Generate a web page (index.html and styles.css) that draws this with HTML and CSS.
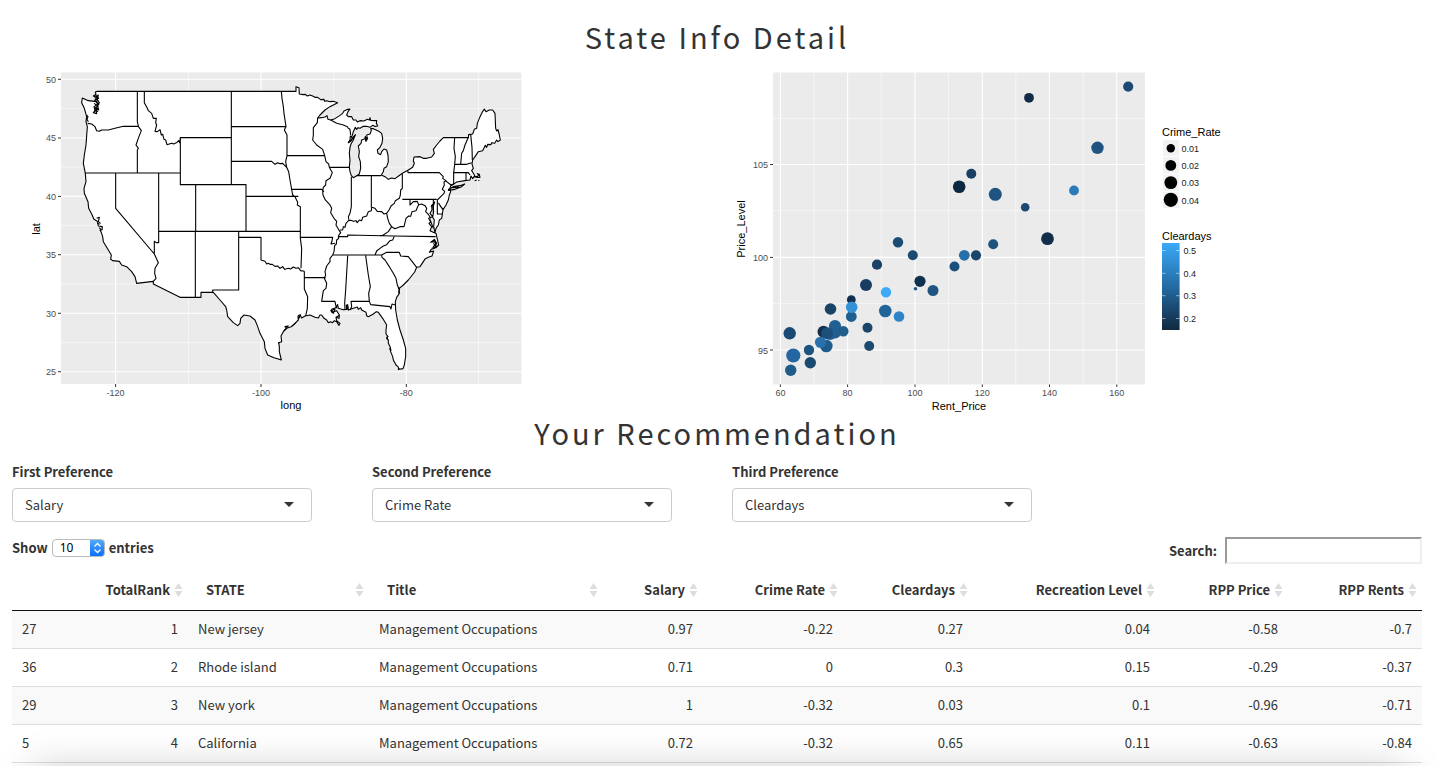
FILE: index.html
```html
<!DOCTYPE html>
<html lang="en">
<head>
<meta charset="utf-8">
<title>State Info Detail</title>
<link rel="stylesheet" href="styles.css">
</head>
<body>
<main class="page">
<h1 class="heading">State Info Detail</h1>
<section class="charts">
<svg class="chart chart-map" viewBox="12 66 512 348" role="img" aria-label="Map of the United States">
<rect class="panel" x="61" y="72.5" width="460.5" height="311.5"/>
<path class="minor" d="M188.5 72.5V384M333.7 72.5V384M478.5 72.5V384M61 108.7H521.5M61 167H521.5M61 225.5H521.5M61 284H521.5M61 342.5H521.5"/>
<path class="major" d="M115.6 72.5V384M261 72.5V384M406.3 72.5V384M61 79.3H521.5M61 138H521.5M61 196.4H521.5M61 254.7H521.5M61 313.3H521.5M61 371.7H521.5"/>
<path class="tick" d="M58 79.3H61M58 138H61M58 196.4H61M58 254.7H61M58 313.3H61M58 371.7H61M115.6 384V387M261 384V387M406.3 384V387"/>
<g transform="translate(20 60) scale(.33333)">
<path class="land" d="M232,94 H828 V80 L837,83 838,102 850,104 856,103 862,108 870,105 878,108 885,112 893,112 902,119 912,118 914,124 920,122 930,125 940,124 953,128 930,140 915,150 900,165 893,174 905,173 915,171 921,167 924,178 932,180 945,176 960,166 968,160 972,153 983,148 990,147 984,155 980,165 985,170 995,170 1000,180 1008,180 1012,186 1020,182 1032,183 1042,178 1048,180 1050,173 1052,181 1064,182 1070,182 1069,190 1073,198 1064,199 1058,196 1050,202 1040,199 1030,199 1020,205 1014,203 1010,208 1006,202 1000,215 995,232 991,228 990,240 985,248 993,243 1000,232 1006,224 1000,240 993,252 990,262 988,280 990,300 988,322 990,335 994,347 1000,353 1010,347 1018,342 1022,325 1021,305 1016,290 1018,275 1015,258 1023,250 1025,240 1035,236 1036,229 1038,242 1042,234 1040,225 1050,222 1054,212 1052,206 1060,206 1075,213 1085,220 1088,235 1086,250 1080,262 1072,270 1074,280 1082,284 1085,275 1092,267 1100,270 1104,285 1105,305 1100,320 1092,325 1090,335 1084,345 1095,350 1105,358 1115,354 1125,356 1140,345 1150,338 1165,330 1178,322 1183,310 1180,303 1182,291 1200,290 1210,295 1220,295 1235,291 1243,280 1240,268 1250,255 1260,243 1270,233 H1345 L1346,224 1352,223 1358,222 1363,208 1370,205 1372,190 1378,175 1386,158 1393,147 1398,155 1408,150 1418,150 1425,160 1427,205 1430,213 1434,209 1438,225 1441,240 1434,245 1430,240 1424,250 1415,248 1413,254 1403,253 1400,262 1396,256 1388,272 1375,275 1365,290 1358,300 1356,312 1360,325 1355,332 1360,340 1366,350 1372,350 1376,345 1372,341 1378,343 1380,352 1370,352 1362,350 1358,356 1353,348 1350,360 1335,362 1310,366 1300,373 1292,378 1290,385 1292,395 1288,405 1285,420 1278,435 1270,448 1262,440 1256,430 1264,442 1269,450 1265,475 1258,480 1255,495 1248,505 1245,518 1241,500 1243,480 1238,472 1241,455 1239,440 1243,430 1235,436 1236,450 1230,460 1238,470 1226,475 1232,486 1227,490 1235,500 1230,512 1243,518 1248,520 1256,555 1248,563 1240,560 1248,552 1243,545 1232,547 1243,538 1250,550 1244,565 1234,568 1228,577 1241,573 1236,588 1225,592 1216,596 1210,605 1200,620 1190,622 1184,636 1165,660 1150,675 1138,685 1138,700 1130,712 1126,725 1127,750 1132,780 1140,810 1150,840 1157,865 1157,890 1153,915 1149,926 1137,928 1134,920 1128,915 1120,900 1118,890 1112,875 1111,862 1105,850 1105,840 1100,835 1104,830 1098,822 1098,810 1100,795 1088,775 1075,757 1069,755 1060,762 1045,770 1040,767 1038,757 1025,750 1022,743 1015,748 1012,741 1000,745 985,750 983,734 979,736 980,748 970,749 955,745 953,734 947,743 935,748 936,757 950,752 958,765 957,775 948,772 950,782 960,790 957,796 950,785 943,782 938,788 932,785 925,788 920,780 912,775 905,765 900,765 895,774 885,772 870,765 855,768 845,774 840,764 834,768 835,780 825,790 814,800 800,805 790,815 783,828 785,845 776,848 778,860 778,875 784,900 775,897 762,893 743,885 735,865 733,845 720,820 712,797 705,780 690,768 672,765 662,775 660,790 653,797 640,788 623,770 620,750 617,740 600,720 580,697 H543 V712 H480 L400,672 V664 L350,670 345,650 335,635 320,620 305,615 298,604 278,602 272,598 274,585 265,570 250,545 248,530 243,515 240,510 246,510 247,500 235,498 232,484 222,478 215,462 206,445 204,425 193,400 192,385 198,365 196,340 190,310 193,285 198,255 202,200 198,185 200,170 193,145 185,128 187,114 205,122 230,125 232,133 222,140 225,152 220,158 230,161 228,148 236,150 232,135 238,128 232,120 235,105 228,112 220,108 228,103 226,96Z"/>
<path class="line" d="M352,94V185L355,198M203,190L215,192 225,200 230,212 238,214 245,210 265,210 285,205 310,199H355L364,212 356,232 348,255 355,265 352,270V338M196,339H481M373,94V128L382,145 385,152 395,160 400,175 409,175 407,188 410,195 405,214 412,215 420,209 424,225 428,223 432,238 437,240 441,254 455,250 461,252 467,249 470,248 476,242 479,248 481,233M481,233H634V374H481ZM634,94V233M634,200H798M634,304H755L765,313 773,308 780,311 788,310 800,322M634,374H678V514M527,374V514M416,339V514M678,409H835M287,339V445L403,582M416,514V548L409,548 403,544V582L415,608 405,625 404,640 408,655 400,664M416,514H841M526,514V712M656,514V690H578V697M656,532H723V600L735,604 740,612 745,610 750,613 757,613 765,619 773,618 780,625 788,620 794,628 805,625 812,627 820,621 828,625 835,623 842,632 853,634M841,514V440L832,435 833,427 825,410 818,405 815,388M784,94L786,115 790,140 792,160 798,200 793,210 801,225V287H914M801,287L797,305 800,322 806,335 810,360 815,388H905L912,395M893,174L892,188 880,203 880,225 878,240 890,255 908,268 914,287 918,305 926,312 928,322 937,338 930,355 918,362 917,375 910,382 908,392 909,405 916,420 930,435 935,445 932,458 942,475 950,484 948,495 958,512M928,322H988M994,350V440L990,460 985,470 987,480 978,490 975,502 970,500 968,510 960,510M1010,347H1084M1054,347V442M983,483L992,481 1000,484 1008,482 1012,488 1018,480 1025,482 1028,472 1040,468 1045,455 1054,452 1055,442 1065,445 1072,454 1085,455 1092,462 1100,460 1107,450 1113,438 1123,430 1126,422 1138,415 1141,405 1142,390 1147,385V340M1100,460L1103,475 1108,490 1115,500 1125,506 1140,500 1152,500 1155,488 1158,475 1166,468 1172,469 1176,455 1188,452 1193,440 1196,434 1192,424 1180,425 1170,435V418M1147,418H1250M1163,330L1164,338H1258L1270,350 1268,355 1278,362 1272,366 1273,375 1267,388 1274,394 1272,400 1260,412 1252,420V462H1269M1276,362L1293,375M1291,375L1301,372 1301,338 1304,314 1306,290 1302,265 1304,233M1345,232L1335,255 1330,272 1325,280 1322,312M1304,313H1340L1355,308M1301,338H1338V360M1338,338H1345L1350,345M1352,223L1356,262 1357,300M1247,530L1120,528 983,525V530H955M1115,500L1105,515 1090,525 1080,528M1123,529L1118,540 1110,542 1100,554 1090,558 1080,565 1070,573 1065,585M938,585H1085M841,532H938L936,543 933,552 945,550M958,512L962,518 955,528 956,535 950,540 949,552 944,557 942,575 938,585 930,595 930,605 920,618 915,635 917,645 913,655 920,670 918,685 910,692 905,724H945L947,735 951,745M841,514V535L845,565 843,625M853,634V687L863,710 862,745 857,768M853,653H917M983,587L977,690 974,730 975,747M1037,587L1045,645 1051,680 1046,700 1048,724H993L995,740 990,750M1048,724L1052,734 1110,740 1113,747 1116,732 1126,735M1085,585L1086,592 1095,600 1108,620 1120,640 1128,655 1132,675 1137,687M1085,585L1100,577H1138L1142,588 1165,590 1190,622M932,180L950,190 970,195 982,200 985,205 990,208 992,225M1196,434L1205,432 1215,437 1220,445 1217,455 1225,463 1232,475"/>
<path class="line" d="M1286,388L1300,380 1320,377 1334,372 1325,380 1305,388 1285,391ZM1298,384L1316,381M1364,362L1370,360M1376,363L1377,360M222,110L232,112 225,118 235,122M222,130L234,138 225,143 235,145M224,158L226,150 234,155M200,165L204,170 201,178 205,185M230,475L238,472 235,485 242,490M238,503L244,510M232,490L239,493M800,805L792,812 805,798 795,800ZM815,799L828,788M835,778L842,765 834,774M1100,830L1103,838 1100,834M1108,865L1113,870 1109,870M932,752L945,747 940,760ZM948,772L959,766M980,735L982,748 984,740M1036,232L1038,244 1043,235ZM985,247L1006,226M1138,682L1136,700M1138,924L1134,930M774,850L778,848M1240,550L1250,560 1235,565M226,104L236,115 224,122 237,132 226,146 234,148M1240,418V460M1233,440L1245,425M1230,478L1240,505"/>
</g>
<g class="tick-label" text-anchor="end">
<text x="56" y="83">50</text><text x="56" y="141">45</text><text x="56" y="200">40</text><text x="56" y="258">35</text><text x="56" y="317">30</text><text x="56" y="375">25</text>
</g>
<g class="tick-label" text-anchor="middle">
<text x="115.6" y="396">-120</text><text x="261" y="396">-100</text><text x="406.3" y="396">-80</text>
</g>
<text class="axis-title" x="291" y="409" text-anchor="middle">long</text>
<text class="axis-title" transform="translate(40 229) rotate(-90)" text-anchor="middle">lat</text>
</svg>
<svg class="chart chart-scatter" viewBox="732 66 500 348" role="img" aria-label="Price level by rent price">
<defs><linearGradient id="days" x1="0" y1="0" x2="0" y2="1"><stop offset="0" stop-color="#3aa9f9"/><stop offset=".5" stop-color="#246ba3"/><stop offset="1" stop-color="#10293f"/></linearGradient></defs>
<rect class="panel" x="773" y="72.5" width="372" height="312"/>
<path class="minor" d="M814 72.5V384.5M881.3 72.5V384.5M948.5 72.5V384.5M1015.8 72.5V384.5M1083.2 72.5V384.5M773 118.4H1145M773 210.7H1145M773 303.6H1145"/>
<path class="major" d="M780.4 72.5V384.5M847.6 72.5V384.5M915 72.5V384.5M982.3 72.5V384.5M1049.5 72.5V384.5M1116.8 72.5V384.5M773 164.5H1145M773 257.4H1145M773 350H1145"/>
<path class="tick" d="M770 164.5H773M770 257.4H773M770 350H773M780.4 384.5V387M847.6 384.5V387M915 384.5V387M982.3 384.5V387M1049.5 384.5V387M1116.8 384.5V387"/>
<g>
<circle cx="1029" cy="97.8" r="4.9" fill="#102c49"/><circle cx="1128.2" cy="86.6" r="5.1" fill="#1c4a73"/><circle cx="1097.5" cy="147.8" r="6.2" fill="#1f5480"/><circle cx="995.3" cy="194.3" r="6.5" fill="#1f5480"/><circle cx="1025.2" cy="207.2" r="4.3" fill="#1b4a73"/><circle cx="1074" cy="190.5" r="4.9" fill="#2a7bb8"/><circle cx="1047.5" cy="238.7" r="6.4" fill="#112e4b"/><circle cx="993.2" cy="244.2" r="5" fill="#1f527c"/><circle cx="971.3" cy="173.7" r="5" fill="#1a4064"/><circle cx="959.2" cy="186.7" r="6.3" fill="#0c2740"/><circle cx="898" cy="242.3" r="5.2" fill="#1c4c76"/><circle cx="912.8" cy="255.3" r="5" fill="#1b4a73"/><circle cx="877" cy="264.7" r="5.1" fill="#1a4267"/><circle cx="866" cy="285" r="6" fill="#183d60"/><circle cx="851.3" cy="299.7" r="4.4" fill="#122f4d"/><circle cx="851.3" cy="316.5" r="5.4" fill="#1f5f90"/><circle cx="851.7" cy="307.2" r="5.8" fill="#3391d8"/><circle cx="886" cy="292.3" r="5.2" fill="#3fabf8"/><circle cx="830.5" cy="309" r="5.8" fill="#194467"/><circle cx="789.7" cy="333.3" r="6.2" fill="#1a4a74"/><circle cx="823.5" cy="331.7" r="6" fill="#122f4d"/><circle cx="835" cy="332.5" r="6" fill="#215f92"/><circle cx="835" cy="326" r="6.1" fill="#215f92"/><circle cx="830" cy="334" r="6" fill="#215f92"/><circle cx="827" cy="333.3" r="6" fill="#1c507a"/><circle cx="843.3" cy="331.2" r="5.2" fill="#205c8c"/><circle cx="826.3" cy="346" r="6.3" fill="#1f5c8c"/><circle cx="820.5" cy="342.3" r="5.6" fill="#2871ab"/><circle cx="793.3" cy="355.5" r="7.1" fill="#2467a0"/><circle cx="809" cy="350" r="5.2" fill="#1c5380"/><circle cx="790.7" cy="370.3" r="5.7" fill="#1f5c88"/><circle cx="810.3" cy="362.8" r="5.7" fill="#1b4a70"/><circle cx="867.5" cy="327.7" r="5" fill="#1b4569"/><circle cx="869.2" cy="346" r="5" fill="#1b4a70"/><circle cx="885.3" cy="311" r="6.3" fill="#22659a"/><circle cx="899" cy="316.5" r="5.3" fill="#2e85c6"/><circle cx="920" cy="281.3" r="5.6" fill="#10304f"/><circle cx="915.5" cy="288.7" r="1.8" fill="#1f5480"/><circle cx="933" cy="290.5" r="5.5" fill="#1f5580"/><circle cx="954.5" cy="266.5" r="5" fill="#1c4f7a"/><circle cx="964.3" cy="255.3" r="5.4" fill="#2670aa"/><circle cx="976" cy="255.3" r="5.1" fill="#1a4569"/>
</g>
<g class="tick-label" text-anchor="end"><text x="768" y="168">105</text><text x="768" y="261">100</text><text x="768" y="354">95</text></g>
<g class="tick-label" text-anchor="middle"><text x="780.4" y="396">60</text><text x="847.6" y="396">80</text><text x="915" y="396">100</text><text x="982.3" y="396">120</text><text x="1049.5" y="396">140</text><text x="1116.8" y="396">160</text></g>
<text class="axis-title" x="959" y="410" text-anchor="middle">Rent_Price</text>
<text class="axis-title" transform="translate(745 229) rotate(-90)" text-anchor="middle">Price_Level</text>
<text class="axis-title" x="1162" y="136">Crime_Rate</text>
<path class="key" d="M1163 140h16v16h-16zM1163 157h16v16.500h-16zM1163 174.500h16v16.500h-16zM1163 192h16v16h-16z"/>
<circle cx="1170.800" cy="148.200" r="4.200"/><circle cx="1170.800" cy="165.400" r="5.400"/><circle cx="1170.800" cy="182.600" r="6.400"/><circle cx="1170.800" cy="199.800" r="7.100"/>
<g class="legend-label"><text x="1181.500" y="152">0.01</text><text x="1181.500" y="169">0.02</text><text x="1181.500" y="186">0.03</text><text x="1181.500" y="204">0.04</text><text x="1183.500" y="254">0.5</text><text x="1183.500" y="277">0.4</text><text x="1183.500" y="299">0.3</text><text x="1183.500" y="322">0.2</text></g>
<text class="axis-title" x="1162" y="240">Cleardays</text>
<rect x="1162" y="243" width="17.600" height="87" fill="url(#days)"/>
<path class="scale-tick" d="M1162 250.500h3.500M1176 250.500h3.500M1162 273.300h3.500M1176 273.300h3.500M1162 295.700h3.500M1176 295.700h3.500M1162 318.500h3.500M1176 318.500h3.500"/>
</svg>
</section>
<h1 class="heading">Your Recommendation</h1>
<form class="preferences">
<div class="field"><label for="first">First Preference</label><div class="picker"><select id="first"><option>Salary</option><option>Crime Rate</option><option>Cleardays</option></select></div></div>
<div class="field"><label for="second">Second Preference</label><div class="picker"><select id="second"><option>Crime Rate</option><option>Salary</option><option>Cleardays</option></select></div></div>
<div class="field"><label for="third">Third Preference</label><div class="picker"><select id="third"><option>Cleardays</option><option>Salary</option><option>Crime Rate</option></select></div></div>
</form>
<div class="toolbar">
<label class="length">Show <select class="length-select"><option>10</option><option>25</option><option>50</option></select> entries</label>
<label class="search">Search: <input class="search-input" type="search"></label>
</div>
<table class="results">
<colgroup><col class="c-id"><col class="c-rank"><col class="c-state"><col class="c-title"><col class="c-salary"><col class="c-crime"><col class="c-clear"><col class="c-rec"><col class="c-price"><col class="c-rents"></colgroup>
<thead><tr><th></th><th class="num sort">TotalRank</th><th class="sort">STATE</th><th class="sort">Title</th><th class="num sort">Salary</th><th class="num sort">Crime Rate</th><th class="num sort">Cleardays</th><th class="num sort">Recreation Level</th><th class="num sort">RPP Price</th><th class="num sort">RPP Rents</th></tr></thead>
<tbody>
<tr><td>27</td><td class="num">1</td><td>New jersey</td><td>Management Occupations</td><td class="num">0.97</td><td class="num">-0.22</td><td class="num">0.27</td><td class="num">0.04</td><td class="num">-0.58</td><td class="num">-0.7</td></tr>
<tr><td>36</td><td class="num">2</td><td>Rhode island</td><td>Management Occupations</td><td class="num">0.71</td><td class="num">0</td><td class="num">0.3</td><td class="num">0.15</td><td class="num">-0.29</td><td class="num">-0.37</td></tr>
<tr><td>29</td><td class="num">3</td><td>New york</td><td>Management Occupations</td><td class="num">1</td><td class="num">-0.32</td><td class="num">0.03</td><td class="num">0.1</td><td class="num">-0.96</td><td class="num">-0.71</td></tr>
<tr><td>5</td><td class="num">4</td><td>California</td><td>Management Occupations</td><td class="num">0.72</td><td class="num">-0.32</td><td class="num">0.65</td><td class="num">0.11</td><td class="num">-0.63</td><td class="num">-0.84</td></tr>
</tbody>
</table>
</main>
<div class="window-shadow"></div>
</body>
</html>
```
FILE: styles.css
```css
* { box-sizing: border-box; }
body { margin: 0; background: #fff; color: #333; font: 13px/20px "Noto Sans CJK SC", "Noto Sans", sans-serif; }
.page { padding: 18px 15px 0 12px; }
.heading { margin: 0; font-size: 29px; font-weight: 400; line-height: 36px; letter-spacing: 3px; text-align: center; }
.charts { display: grid; grid-template-columns: 1fr 1fr; gap: 30px; padding-top: 12px; }
.chart { display: block; max-width: 100%; height: auto; font-family: "Liberation Sans", Arial, sans-serif; }
.chart-map { width: 512px; }
.chart-scatter { width: 500px; }
.panel { fill: #ebebeb; }
.major { stroke: #fff; stroke-width: 1.1; }
.minor { stroke: #fff; stroke-width: .5; }
.tick { stroke: #333; stroke-width: 1; }
.tick-label { font-size: 9px; fill: #4d4d4d; }
.legend-label { font-size: 9px; fill: #1a1a1a; }
.axis-title { font-size: 11px; fill: #000; }
.land, .line { stroke: #000; stroke-width: 3.3; stroke-linejoin: round; }
.land { fill: #fff; }
.line { fill: none; }
.key { fill: #f2f2f2; }
.scale-tick { stroke: #fff; stroke-width: .5; }
.preferences { display: grid; grid-template-columns: repeat(4, 1fr); gap: 30px; padding-top: 12px; }
.field { max-width: 300px; }
.field label, .toolbar label { font-weight: 700; }
.field label { display: block; margin-bottom: 6px; }
.picker { position: relative; }
.picker::after { content: ""; position: absolute; right: 18px; top: 14px; border: 5px solid transparent; border-top-color: #333; border-bottom: 0; pointer-events: none; }
.picker select { display: block; width: 100%; height: 34px; padding: 0 12px; appearance: none; border: 1px solid #ccc; border-radius: 4px; background: #fff; color: #333; font: inherit; }
.toolbar { display: flex; align-items: flex-start; justify-content: space-between; padding-top: 15px; }
.length { display: flex; align-items: center; gap: 4px; height: 22px; }
.length-select { appearance: none; width: 53px; height: 18px; padding: 0 7px; border: 1px solid #bbb; border-radius: 4px; color: #000; font: 12px/16px "Noto Sans", sans-serif; background: #fff url("data:image/svg+xml,%3Csvg xmlns='http://www.w3.org/2000/svg' width='15' height='18'%3E%3Cdefs%3E%3ClinearGradient id='b' x2='0' y2='1'%3E%3Cstop stop-color='%2355acfb'/%3E%3Cstop offset='1' stop-color='%23046cff'/%3E%3C/linearGradient%3E%3C/defs%3E%3Cpath d='M0 0h11q4 0 4 4v10q0 4-4 4H0z' fill='url(%23b)'/%3E%3Cpath d='M4.500 7.500l3-3 3 3M4.500 10.500l3 3 3-3' fill='none' stroke='white' stroke-width='1.300'/%3E%3C/svg%3E") right center no-repeat; background-origin: border-box; }
.search { display: flex; align-items: center; gap: 8px; }
.search-input { width: 197px; height: 27px; padding: 1px 4px; appearance: none; border: 2px solid; border-color: #9a9a9a #eee #eee #9a9a9a; background: #fff; font: inherit; }
.results { width: 100%; margin-top: 6px; table-layout: fixed; border-collapse: separate; border-spacing: 0; }
.c-id { width: 74px; } .c-rank { width: 102px; } .c-state { width: 181px; } .c-title { width: 234px; } .c-salary { width: 100px; } .c-crime { width: 140px; } .c-clear { width: 130px; } .c-rec { width: 187px; } .c-price { width: 128px; } .c-rents { width: 134px; }
.results th { padding: 10px 18px; border-bottom: 1px solid #111; text-align: left; font-weight: 700; white-space: nowrap; }
.results td { padding: 8px 10px 9px; border-bottom: 1px solid #ddd; }
.results .num { text-align: right; }
.results tbody tr:nth-child(odd) { background: #f9f9f9; }
.results .sort { background: url("data:image/svg+xml,%3Csvg xmlns='http://www.w3.org/2000/svg' width='19' height='16'%3E%3Cpath d='M5.500 7l4-6 4 6zM5.500 9h8l-4 6z' fill='%23ddd'/%3E%3C/svg%3E") right center no-repeat; }
.window-shadow { position: fixed; left: 32px; right: 32px; top: 100%; height: 40px; margin-top: 4px; box-shadow: 0 0 40px rgba(0, 0, 0, .22); pointer-events: none; }
```
